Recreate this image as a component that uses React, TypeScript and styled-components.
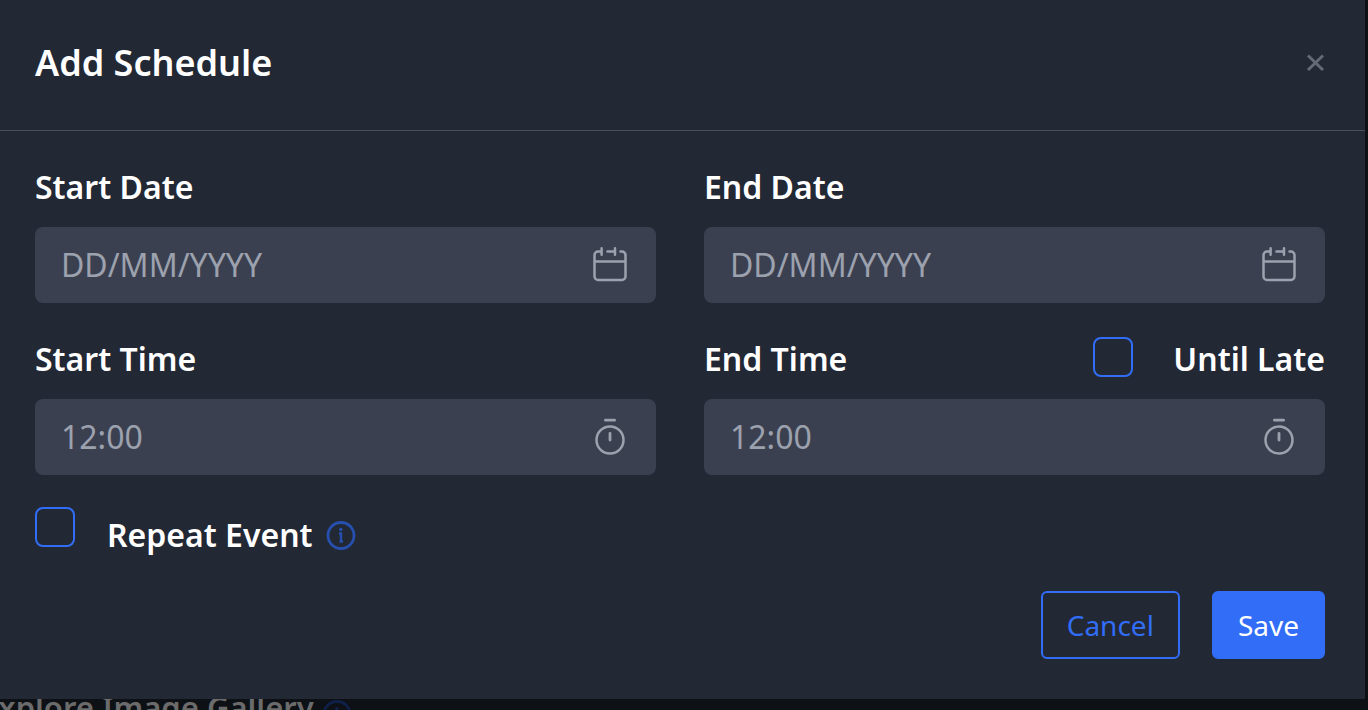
import React from "react";
import styled, { createGlobalStyle } from "styled-components";

const GlobalStyle = createGlobalStyle`
  *, *::before, *::after { box-sizing: border-box; }
  body {
    margin: 0;
    background: #0d1015;
    color: #ffffff;
    font-family: "Noto Sans", "Open Sans", sans-serif;
  }
`;

const Page = styled.div`
  display: flex;
  flex-direction: column;
  height: 100vh;
  overflow: hidden;
`;

const Dialog = styled.section`
  flex: none;
  margin-right: 3px;
  background: #222834;
`;

const Header = styled.header`
  display: flex;
  align-items: center;
  justify-content: space-between;
  padding: 38px 40px 42px 35px;
  border-bottom: 1px solid #4a4f5b;
`;

const Title = styled.h1`
  margin: 0;
  font-size: 36px;
  font-weight: 600;
  line-height: 50px;
`;

const CloseButton = styled.button`
  display: flex;
  padding: 0;
  border: 0;
  background: none;
  color: #646a76;
  cursor: pointer;
`;

const Form = styled.form`
  padding: 34px 40px 40px 35px;
`;

const Fields = styled.div`
  display: grid;
  grid-template-columns: 1fr 1fr;
  gap: 34px 48px;
`;

const Field = styled.div`
  display: flex;
  flex-direction: column;
  gap: 18px;
  min-width: 0;
`;

const FieldHead = styled.div`
  display: flex;
  justify-content: space-between;
`;

const Label = styled.label`
  font-size: 32px;
  font-weight: 600;
  line-height: 44px;
  white-space: nowrap;
`;

const InputBox = styled.div`
  display: flex;
  align-items: center;
  height: 76px;
  padding: 0 28px 0 26px;
  border-radius: 8px;
  background: #3b4050;
  color: #9ca1ae;
`;

const Input = styled.input`
  flex: 1;
  min-width: 0;
  height: 100%;
  padding: 0 0 2px;
  border: 0;
  outline: 0;
  background: none;
  color: inherit;
  font-family: inherit;
  font-size: 32px;
  &::placeholder { color: #9ca1ae; opacity: 1; }
`;

const CheckRow = styled.div<{ $gap: number }>`
  display: flex;
  align-items: flex-start;
  gap: ${(p) => p.$gap}px;
`;

const Checkbox = styled.input`
  appearance: none;
  flex: none;
  width: 40px;
  height: 40px;
  margin: 0;
  border: 2px solid #316df6;
  border-radius: 8px;
  cursor: pointer;
  &:checked { background: #316df6; }
`;

const RepeatRow = styled(CheckRow)`
  margin-top: 32px;
`;

const RepeatText = styled.div`
  display: flex;
  align-items: center;
  gap: 13px;
  padding-top: 6px;
`;

const Footer = styled.footer`
  display: flex;
  justify-content: flex-end;
  gap: 32px;
  margin-top: 34px;
`;

const Button = styled.button<{ $primary?: boolean }>`
  height: 68px;
  padding: 0 24px;
  border: 2px solid #316df6;
  border-radius: 6px;
  background: ${(p) => (p.$primary ? "#316df6" : "transparent")};
  color: ${(p) => (p.$primary ? "#ffffff" : "#316df6")};
  font-family: inherit;
  font-size: 28px;
  font-weight: 400;
  cursor: pointer;
`;

const Behind = styled.div`
  display: flex;
  flex: 1;
  align-items: flex-start;
  gap: 8px;
  min-height: 0;
  overflow: hidden;
  margin-left: -19px;
  color: #6b6b6b;
`;

const BehindTitle = styled.h2`
  margin: 0;
  font-size: 31px;
  font-weight: 600;
  line-height: 16px;
  white-space: nowrap;
`;

const CloseIcon = () => (
  <svg width="20" height="20" viewBox="0 0 20 20" fill="none" stroke="currentColor" strokeWidth="3" aria-hidden="true">
    <path d="M3 2.500 18 17M18 2.500 3 17" />
  </svg>
);

const CalendarIcon = () => (
  <svg width="36" height="38" viewBox="0 0 36 38" fill="none" stroke="currentColor" strokeWidth="2.500" strokeLinecap="round" aria-hidden="true">
    <path d="M9.600 5.500H6A3.500 3.500 0 0 0 2.500 9v21.500A3.500 3.500 0 0 0 6 34h24a3.500 3.500 0 0 0 3.500-3.500V9A3.500 3.500 0 0 0 30 5.500h-1.500M15.500 5.500H23M3 15.500h30M9.600 2.200v6.500M23 2.200v6.500" />
  </svg>
);

const TimerIcon = () => (
  <svg width="36" height="38" viewBox="0 0 36 38" fill="none" stroke="currentColor" strokeWidth="2.500" strokeLinecap="round" aria-hidden="true">
    <circle cx="18" cy="22" r="13.500" />
    <path d="M13.400 2.200h9.200M18 15.300v6.800" strokeWidth="2.800" />
  </svg>
);

const InfoIcon = ({ color }: { color: string }) => (
  <svg width="30" height="30" viewBox="0 0 30 30" fill="none" stroke={color} aria-hidden="true">
    <circle cx="15" cy="15.500" r="13" strokeWidth="2.800" />
    <path d="M13 13.500h2V21M13.500 21.500h3.500" strokeWidth="2.400" />
    <circle cx="14.800" cy="9.500" r="1.800" fill={color} stroke="none" />
  </svg>
);

type EntryProps = {
  id: string;
  label: string;
  placeholder: string;
  icon: React.ReactNode;
  children?: React.ReactNode;
};

const Entry = ({ id, label, placeholder, icon, children }: EntryProps) => (
  <Field>
    <FieldHead>
      <Label htmlFor={id}>{label}</Label>
      {children}
    </FieldHead>
    <InputBox>
      <Input id={id} type="text" placeholder={placeholder} />
      {icon}
    </InputBox>
  </Field>
);

export default function App() {
  return (
    <>
      <GlobalStyle />
      <Page>
        <Dialog role="dialog" aria-labelledby="schedule-title">
          <Header>
            <Title id="schedule-title">Add Schedule</Title>
            <CloseButton type="button" aria-label="Close">
              <CloseIcon />
            </CloseButton>
          </Header>
          <Form onSubmit={(e) => e.preventDefault()}>
            <Fields>
              <Entry id="start-date" label="Start Date" placeholder="DD/MM/YYYY" icon={<CalendarIcon />} />
              <Entry id="end-date" label="End Date" placeholder="DD/MM/YYYY" icon={<CalendarIcon />} />
              <Entry id="start-time" label="Start Time" placeholder="12:00" icon={<TimerIcon />} />
              <Entry id="end-time" label="End Time" placeholder="12:00" icon={<TimerIcon />}>
                <CheckRow $gap={40}>
                  <Checkbox id="until-late" type="checkbox" />
                  <Label htmlFor="until-late">Until Late</Label>
                </CheckRow>
              </Entry>
            </Fields>
            <RepeatRow $gap={32}>
              <Checkbox id="repeat-event" type="checkbox" />
              <RepeatText>
                <Label htmlFor="repeat-event">Repeat Event</Label>
                <InfoIcon color="#264fae" />
              </RepeatText>
            </RepeatRow>
            <Footer>
              <Button type="button">Cancel</Button>
              <Button type="submit" $primary>Save</Button>
            </Footer>
          </Form>
        </Dialog>
        <Behind aria-hidden="true">
          <BehindTitle>Explore Image Gallery</BehindTitle>
          <InfoIcon color="#112048" />
        </Behind>
      </Page>
    </>
  );
}
